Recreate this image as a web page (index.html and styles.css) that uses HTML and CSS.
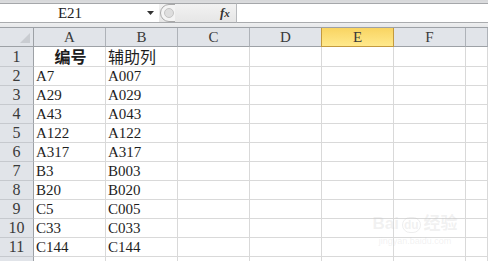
FILE: index.html
```html
<!DOCTYPE html>
<html lang="zh-CN">
<head>
<meta charset="UTF-8">
<meta name="viewport" content="width=device-width, initial-scale=1.0">
<title>Sheet1</title>
<link rel="stylesheet" href="styles.css">
</head>
<body>
    <div class="formula-bar">
        <div class="name-box">
            <span class="cell-ref">E21</span>
            <svg class="drop" width="7" height="4" viewBox="0 0 7 4"><path d="M0 0 H7 L3.5 4 Z" fill="#333"/></svg>
        </div>
        <div class="fx-area">
            <svg class="knob" width="16" height="18" viewBox="0 0 16 18">
                <path d="M15 0.5 H9 A8.5 8.5 0 0 0 9 17.5 H15" fill="#f4f4f4" stroke="#a9a9a9"/>
                <circle cx="9" cy="9" r="4.5" fill="#dedede" stroke="#c4c4c4"/>
            </svg>
            <span class="fx">f<span class="fx-x">x</span></span>
        </div>
        <div class="formula-input"></div>
    </div>

    <div class="sheet">
        <div class="corner"><svg width="10" height="10" viewBox="0 0 10 10"><path d="M10 0 V10 H0 Z" fill="#c9ccd1"/></svg></div>
        <div class="col-head">A</div>
        <div class="col-head">B</div>
        <div class="col-head">C</div>
        <div class="col-head">D</div>
        <div class="col-head active">E</div>
        <div class="col-head">F</div>
        <div class="col-head last"></div>

        <div class="row-head first">1</div>
        <div class="cell first title">编号</div>
        <div class="cell first zh">辅助列</div>
        <div class="cell first"></div><div class="cell first"></div><div class="cell first"></div><div class="cell first"></div><div class="cell first"></div>

        <div class="row-head">2</div><div class="cell">A7</div><div class="cell">A007</div>
        <div class="cell"></div><div class="cell"></div><div class="cell"></div><div class="cell"></div><div class="cell"></div>

        <div class="row-head">3</div><div class="cell">A29</div><div class="cell">A029</div>
        <div class="cell"></div><div class="cell"></div><div class="cell"></div><div class="cell"></div><div class="cell"></div>

        <div class="row-head">4</div><div class="cell">A43</div><div class="cell">A043</div>
        <div class="cell"></div><div class="cell"></div><div class="cell"></div><div class="cell"></div><div class="cell"></div>

        <div class="row-head">5</div><div class="cell">A122</div><div class="cell">A122</div>
        <div class="cell"></div><div class="cell"></div><div class="cell"></div><div class="cell"></div><div class="cell"></div>

        <div class="row-head">6</div><div class="cell">A317</div><div class="cell">A317</div>
        <div class="cell"></div><div class="cell"></div><div class="cell"></div><div class="cell"></div><div class="cell"></div>

        <div class="row-head">7</div><div class="cell">B3</div><div class="cell">B003</div>
        <div class="cell"></div><div class="cell"></div><div class="cell"></div><div class="cell"></div><div class="cell"></div>

        <div class="row-head">8</div><div class="cell">B20</div><div class="cell">B020</div>
        <div class="cell"></div><div class="cell"></div><div class="cell"></div><div class="cell"></div><div class="cell"></div>

        <div class="row-head">9</div><div class="cell">C5</div><div class="cell">C005</div>
        <div class="cell"></div><div class="cell"></div><div class="cell"></div><div class="cell"></div><div class="cell"></div>

        <div class="row-head">10</div><div class="cell">C33</div><div class="cell">C033</div>
        <div class="cell"></div><div class="cell"></div><div class="cell"></div><div class="cell"></div><div class="cell"></div>

        <div class="row-head">11</div><div class="cell">C144</div><div class="cell">C144</div>
        <div class="cell"></div><div class="cell"></div><div class="cell"></div><div class="cell"></div><div class="cell"></div>

        <div class="row-head"></div>
        <div class="cell"></div><div class="cell"></div><div class="cell"></div><div class="cell"></div><div class="cell"></div><div class="cell"></div><div class="cell"></div>
    </div>

    <!-- watermark -->
    <div class="watermark">
        <div class="wm-logo">Bai<span class="wm-du">du</span>经验</div>
        <div class="wm-url">jingyan.baidu.com</div>
    </div>
</body>
</html>
```

FILE: styles.css
```css
body {
    margin: 0;
    background: #fff;
    font-family: "Liberation Serif", "Noto Sans CJK SC", serif;
    color: #222;
    overflow: hidden;
    position: relative;
    height: 261px;
}

.formula-bar {
    display: flex;
    height: 27px;
    box-sizing: border-box;
    padding: 3px 0 4px;
    background: linear-gradient(#d6d7d9 0, #dcdddf 3px, #eeeff0 23px, #e6e7e9 27px);
}
.name-box {
    width: 159px;
    display: flex;
    align-items: center;
    background: #fff;
    border-top: 1px solid #a5a7aa;
    border-bottom: 1px solid #a9abae;
    box-sizing: border-box;
}
.cell-ref {
    width: 140px;
    text-align: center;
    font-size: 15px;
    color: #222;
}
.drop {
    margin-left: 7px;
}
.fx-area {
    width: 78px;
    display: flex;
    align-items: center;
    background: linear-gradient(#f2f2f2, #e6e6e6);
    border-top: 1px solid #a5a7aa;
    border-bottom: 1px solid #a9abae;
    border-right: 1px solid #b8babd;
    box-sizing: border-box;
}
.knob {
    margin-left: 1px;
}
.fx {
    margin-left: 44px;
    font-style: italic;
    font-weight: bold;
    font-size: 13px;
    color: #333;
}
.fx-x {
    font-size: 11px;
}
.formula-input {
    flex: 1;
    background: #fff;
    border-top: 1px solid #a5a7aa;
    border-bottom: 1px solid #a9abae;
}

.sheet {
    display: grid;
    grid-template-columns: 34px repeat(6, 72px) 1fr;
    grid-template-rows: 19px 20px;
    grid-auto-rows: 19px;
    border-top: 1px solid #9da1a6;
}

.corner,
.col-head,
.row-head {
    background: #e1e4e9;
    box-sizing: border-box;
    color: #3a3a3a;
    font-size: 15px;
}
.corner {
    border-right: 1px solid #9da1a6;
    border-bottom: 1px solid #9da1a6;
    display: flex;
    align-items: flex-end;
    justify-content: flex-end;
    padding: 0 3px 3px 0;
}
.col-head {
    border-right: 1px solid #aeb2b8;
    border-bottom: 1px solid #9da1a6;
    display: flex;
    align-items: center;
    justify-content: center;
}
.col-head.active {
    background: linear-gradient(#f9d462, #ffe98c);
    border: 1px solid #c39a3f;
    border-top: none;
    margin-left: -1px;
}
.row-head {
    border-right: 1px solid #9da1a6;
    border-bottom: 1px solid #c6c9ce;
    display: flex;
    align-items: center;
    justify-content: center;
    font-size: 16px;
}

.cell {
    border-right: 1px solid #d9d9d9;
    border-bottom: 1px solid #d9d9d9;
    box-sizing: border-box;
    font-size: 15px;
    padding: 1px 0 0 2px;
    line-height: 17px;
    white-space: nowrap;
    color: #1e1e1e;
}
.cell.first {
    line-height: 19px;
    padding-top: 0;
}
.cell.zh {
    font-family: "Noto Sans CJK SC", sans-serif;
    font-size: 16px;
}
.cell.title {
    font-family: "Noto Sans CJK SC", sans-serif;
    font-weight: bold;
    text-align: center;
    font-size: 16px;
}

.watermark {
    position: absolute;
    left: 370px;
    top: 214px;
    width: 90px;
    color: rgba(200, 200, 200, 0.25);
    font-family: "Liberation Sans", "Noto Sans CJK SC", sans-serif;
    text-align: center;
}
.wm-logo {
    font-size: 17px;
    font-weight: bold;
    line-height: 20px;
}
.wm-du {
    font-size: 12px;
    border: 1px solid rgba(200, 200, 200, 0.3);
    border-radius: 8px;
    padding: 0 1px;
    margin: 0 3px;
}
.wm-url {
    font-size: 9px;
    line-height: 12px;
}
```
